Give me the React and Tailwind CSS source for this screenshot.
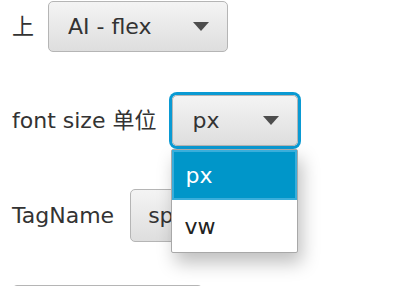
// Settings form with an open combo box popup
const FONT = { fontFamily: '"DejaVu Sans", "Noto Sans CJK SC", sans-serif' };

function Arrow() {
  return (
    <svg width="16" height="9" viewBox="0 0 16 9" className="shrink-0">
      <path d="M0 0 H16 L8 9 Z" fill="#4d4d4d" />
    </svg>
  );
}

function Combo({ value, width, focused }) {
  return (
    <div
      className={`rounded-[5px] ${focused ? 'ring-[3px] ring-[#0a9ad3] ring-offset-0' : ''}`}
      style={{ width }}
    >
      <div className="flex items-center justify-between h-[51px] pl-[19px] pr-[18px] rounded-[5px] border border-[#b5b5b5] bg-gradient-to-b from-[#f4f4f4] to-[#dedede] text-[22px] text-[#333]">
        <span>{value}</span>
        <Arrow />
      </div>
    </div>
  );
}

export default function App() {
  return (
    <div className="relative w-[398px] h-[286px] overflow-hidden bg-white" style={FONT}>
      <div className="flex flex-col gap-[43px] pt-[1px] pl-[12px] text-[22px] text-[#333]">
        <div className="flex items-center gap-[14px]">
          <span>上</span>
          <Combo value="AI - flex" width={180} />
        </div>

        <div className="flex items-center gap-[16px]">
          <span>font size 单位</span>
          <div className="relative">
            <Combo value="px" width={126} focused />
            {/* popup list */}
            <div className="absolute -left-[1px] top-[54px] z-10 w-[127px] bg-white border border-[#a8a8a8] rounded-[2px] shadow-[4px_10px_18px_rgba(0,0,0,0.25)]">
              <div className="h-[50px] flex items-center pl-[11px] bg-[#0096c9] border-[2px] border-[#39aedb] text-white">px</div>
              <div className="h-[52px] flex items-center pl-[12px] text-[#222]">vw</div>
            </div>
          </div>
        </div>

        <div className="flex items-center gap-[16px]">
          <span>TagName</span>
          <div className="flex items-center h-[53px] w-[42px] pl-[17px] overflow-hidden whitespace-nowrap rounded-l-[5px] border border-[#b5b5b5] bg-gradient-to-b from-[#f4f4f4] to-[#dedede]">
            span
          </div>
        </div>

        <div className="w-[191px] h-[40px] rounded-[5px] border border-[#b5b5b5] bg-white" />
      </div>
    </div>
  );
}
